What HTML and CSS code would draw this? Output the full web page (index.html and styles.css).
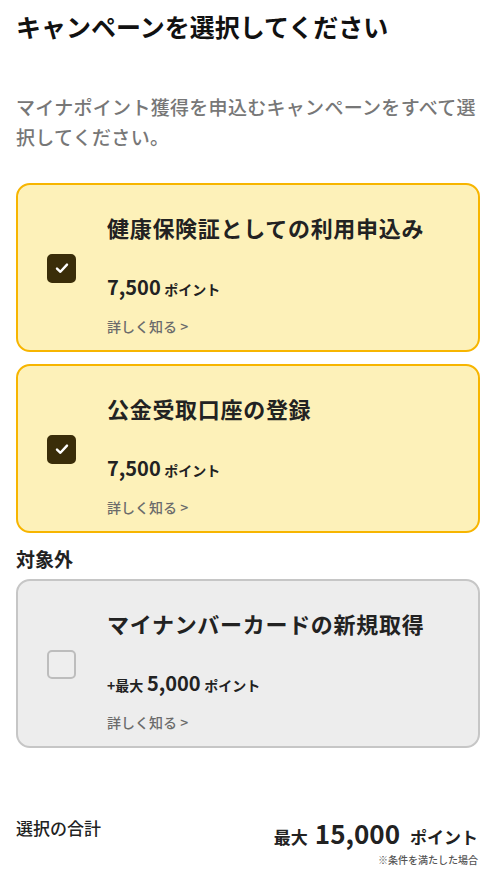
FILE: index.html
```html
<!DOCTYPE html>
<html lang="ja">
<head>
  <meta charset="utf-8">
  <title>キャンペーンを選択してください</title>
  <link rel="stylesheet" href="styles.css">
</head>
<body>
  <div class="page">
    <h1 class="page-title">キャンペーンを選択してください</h1>
    <p class="lead">マイナポイント獲得を申込むキャンペーンをすべて選択してください。</p>

    <div class="card card-active">
      <span class="check is-checked">
        <svg viewBox="0 0 14 14" width="14" height="14"><path d="M2 7.6l3.4 3.2L12 3.6" fill="none" stroke="#fff" stroke-width="2.4" stroke-linecap="round" stroke-linejoin="round"/></svg>
      </span>
      <div class="card-body">
        <div class="card-title">健康保険証としての利用申込み</div>
        <div class="card-points"><span class="num">7,500</span> <span class="unit">ポイント</span></div>
        <div class="card-link">詳しく知る &gt;</div>
      </div>
    </div>

    <div class="card card-active">
      <span class="check is-checked">
        <svg viewBox="0 0 14 14" width="14" height="14"><path d="M2 7.6l3.4 3.2L12 3.6" fill="none" stroke="#fff" stroke-width="2.4" stroke-linecap="round" stroke-linejoin="round"/></svg>
      </span>
      <div class="card-body">
        <div class="card-title">公金受取口座の登録</div>
        <div class="card-points"><span class="num">7,500</span> <span class="unit">ポイント</span></div>
        <div class="card-link">詳しく知る &gt;</div>
      </div>
    </div>

    <h2 class="section-title">対象外</h2>

    <div class="card card-disabled">
      <span class="check"></span>
      <div class="card-body">
        <div class="card-title">マイナンバーカードの新規取得</div>
        <div class="card-points"><span class="unit">+最大</span> <span class="num">5,000</span> <span class="unit">ポイント</span></div>
        <div class="card-link">詳しく知る &gt;</div>
      </div>
    </div>

    <div class="summary">
      <div class="summary-label">選択の合計</div>
      <div class="summary-total">
        <div class="total-line"><span class="total-unit">最大</span><span class="total-num">15,000</span><span class="total-unit">ポイント</span></div>
        <div class="total-note">※条件を満たした場合</div>
      </div>
    </div>
  </div>
</body>
</html>
```

FILE: styles.css
```css
:root {
  --text-color: #1a1a1a;
  --sub-color: #777;
  --yellow-bg: #fdf1b9;
  --yellow-border: #f7b500;
  --gray-bg: #ededed;
  --gray-border: #c6c6c6;
  --check-color: #3a2d09;
}

body {
  margin: 0;
  background: #fff;
  color: var(--text-color);
  font-family: "Noto Sans CJK JP", "Noto Sans", sans-serif;
}

.page {
  padding: 8px 14px 0 16px;
}

.page-title {
  margin: 0;
  font-size: 25px;
  line-height: 36px;
  font-weight: 700;
  color: #111;
}

.lead {
  margin: 48px 0 0 0;
  font-size: 19px;
  line-height: 30px;
  letter-spacing: 0.3px;
  color: var(--sub-color);
  font-weight: 500;
}

.card {
  display: flex;
  align-items: center;
  gap: 31px;
  margin-top: 12px;
  padding: 26px 16px 13px 29px;
  border: 2px solid;
  border-radius: 14px;
}

.lead + .card {
  margin-top: 31px;
}

.section-title + .card {
  margin-top: 7px;
}

.card-active {
  background: var(--yellow-bg);
  border-color: var(--yellow-border);
}

.card-disabled {
  background: var(--gray-bg);
  border-color: var(--gray-border);
}

.check {
  flex: none;
  width: 29px;
  height: 29px;
  box-sizing: border-box;
  border-radius: 5px;
  border: 2px solid #bdbdbd;
  background: #eeeeee;
  display: flex;
  align-items: center;
  justify-content: center;
  margin-top: -12px;
}

.check.is-checked {
  background: var(--check-color);
  border-color: var(--check-color);
}

.card-body {
  display: flex;
  flex-direction: column;
}

.card-title {
  font-size: 22px;
  line-height: 32px;
  letter-spacing: 0.7px;
  font-weight: 700;
  color: #222;
}

.card-points {
  margin-top: 31px;
  line-height: 28px;
  font-weight: 700;
  color: #222;
}

.card-points span {
  line-height: 1;
}

.card-points .num {
  font-size: 20px;
}

.card-points .unit {
  font-size: 14px;
}

.card-link {
  margin-top: 13px;
  font-size: 14px;
  line-height: 22px;
  font-weight: 500;
  color: #6b6b6b;
}

.section-title {
  margin: 13px 0 0 0;
  font-size: 19px;
  line-height: 26px;
  font-weight: 700;
  color: #222;
}

.summary {
  display: flex;
  justify-content: space-between;
  align-items: flex-start;
  margin-top: 68px;
}

.summary-label {
  font-size: 17px;
  line-height: 24px;
  font-weight: 500;
  color: #222;
}

.summary-total {
  margin-top: 4px;
  text-align: right;
  padding-right: 2px;
}

.total-line {
  line-height: 32px;
  font-weight: 700;
  color: #222;
}

.total-line span {
  line-height: 1;
}

.total-num {
  font-size: 26px;
  margin: 0 10px 0 7px;
}

.total-unit {
  font-size: 17px;
}

.total-note {
  font-size: 10px;
  line-height: 14px;
  color: #555;
  font-weight: 500;
}
```
